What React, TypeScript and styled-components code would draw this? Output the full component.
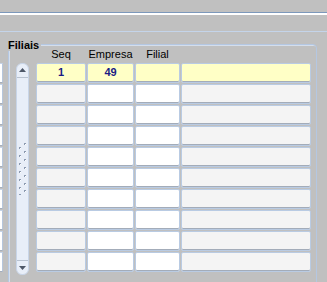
import React from "react";
import styled, { createGlobalStyle } from "styled-components";

const Global = createGlobalStyle`
  html, body { margin: 0; padding: 0; background: #c0c0c0; overflow: hidden; }
  body { font-family: "Liberation Sans", Arial, sans-serif; font-size: 11px; color: #000; }
`;

const Page = styled.div`
  width: 327px;
  height: 282px;
  background: #c0c0c0;
  display: flex;
  flex-direction: column;
  overflow: hidden;
`;

const TopBar = styled.div`
  height: 12px;
  flex: none;
  border-bottom: 1px solid #7c98bb;
`;

const WhiteLine = styled.div`
  height: 2px;
  flex: none;
  background: #ffffff;
`;

const Section = styled.div`
  margin-top: 16px;
  border-top: 1px solid #c4d4ea;
  display: flex;
  flex: 1;
  min-height: 0;
`;

const LeftStrip = styled.div`
  width: 3px;
  margin-top: 31px;
  display: flex;
  flex-direction: column;
  gap: 1px;
  flex: none;
`;

const StripCell = styled.div`
  height: 20px;
  box-sizing: border-box;
  background: #ffffff;
  border-right: 1px solid #b6c6dc;
  border-top: 1px solid #c6d4e8;
  border-bottom: 1px solid #a6aebb;
`;

const Frame = styled.div`
  position: relative;
  margin-left: 5px;
  margin-top: 12px;
  width: 309px;
  height: 260px;
  box-sizing: border-box;
  border: 1px solid #b4c7e2;
  border-radius: 0 4px 0 0;
  box-shadow: inset 1px 1px 0 #d4deec;
  display: flex;
  flex: none;
`;

const FrameTitle = styled.div`
  position: absolute;
  top: -6px;
  left: -1px;
  padding-right: 2px;
  background: #c0c0c0;
  font-weight: bold;
  font-size: 11px;
  line-height: 12px;
  color: #000;
`;

const ScrollBar = styled.div`
  margin-left: 7px;
  margin-top: 18px;
  width: 13px;
  height: 212px;
  box-sizing: border-box;
  border: 1px solid #c8d5e8;
  border-radius: 6px;
  background: #e8eef8;
  display: flex;
  flex-direction: column;
  align-items: center;
  flex: none;
`;

const ArrowButton = styled.div<{ $down?: boolean }>`
  height: 14px;
  width: 100%;
  box-sizing: border-box;
  display: flex;
  align-items: center;
  justify-content: center;
  ${(p) =>
    p.$down
      ? "border-top: 1px solid #b8c2d0; padding-top: 1px;"
      : "border-bottom: 1px solid #b8c2d0; padding-bottom: 1px;"}
  flex: none;
`;

const Track = styled.div`
  flex: 1;
  display: flex;
  align-items: center;
  justify-content: center;
`;

const Table = styled.div`
  margin-left: 7px;
  display: flex;
  flex-direction: column;
  gap: 1px;
`;

const HeaderRow = styled.div`
  height: 17px;
  display: grid;
  grid-template-columns: 50px 47px 45px 130px;
  column-gap: 1px;
  align-items: end;
`;

const HeaderCell = styled.div`
  text-align: center;
  font-size: 11px;
  line-height: 13px;
  color: #000;
  padding-bottom: 1px;
`;

const Row = styled.div`
  display: grid;
  grid-template-columns: 50px 47px 45px 130px;
  column-gap: 1px;
  height: 20px;
`;

const Cell = styled.div<{ $bg: string }>`
  box-sizing: border-box;
  height: 20px;
  background: ${(p) => p.$bg};
  border: 1px solid #b9cbe3;
  border-radius: 2px;
  box-shadow: inset 0 -1px 0 #a3acb9;
  font-weight: bold;
  font-size: 11px;
  line-height: 17px;
  text-align: center;
  color: #1a1a84;
`;

const YELLOW = "#ffffc6";
const GRAY = "#f4f4f4";
const WHITE = "#ffffff";

const Arrow = ({ down }: { down?: boolean }) => (
  <svg width="7" height="4" viewBox="0 0 7 4">
    <polygon points={down ? "0,0 7,0 3.5,4" : "3.5,0 7,4 0,4"} fill="#4e5868" />
  </svg>
);

const Grip = () => {
  const levels = [0, 8, 16, 24, 32, 40, 47];
  return (
    <svg width="9" height="52" viewBox="0 0 9 52">
      {levels.map((y, i) => (
        <g key={i}>
          <rect x="1" y={y + 4} width="2" height="2" fill="#8c9ab0" />
          <rect x="2" y={y + 5} width="1" height="1" fill="#ffffff" />
          <rect x="6" y={y} width="2" height="2" fill="#8c9ab0" />
          <rect x="7" y={y + 1} width="1" height="1" fill="#ffffff" />
        </g>
      ))}
    </svg>
  );
};

const rows = Array.from({ length: 10 }, (_, i) => i);

export default function App() {
  return (
    <Page>
      <Global />
      <TopBar />
      <WhiteLine />
      <Section>
        <LeftStrip>
          {rows.map((i) => (
            <StripCell key={i} />
          ))}
        </LeftStrip>
        <Frame>
          <FrameTitle>Filiais</FrameTitle>
          <ScrollBar>
            <ArrowButton>
              <Arrow />
            </ArrowButton>
            <Track>
              <Grip />
            </Track>
            <ArrowButton $down>
              <Arrow down />
            </ArrowButton>
          </ScrollBar>
          <Table>
            <HeaderRow>
              <HeaderCell>Seq</HeaderCell>
              <HeaderCell>Empresa</HeaderCell>
              <HeaderCell>Filial</HeaderCell>
              <HeaderCell />
            </HeaderRow>
            {rows.map((i) => {
              const first = i === 0;
              return (
                <Row key={i}>
                  <Cell $bg={first ? YELLOW : GRAY}>{first ? "1" : ""}</Cell>
                  <Cell $bg={first ? YELLOW : WHITE}>{first ? "49" : ""}</Cell>
                  <Cell $bg={first ? YELLOW : WHITE} />
                  <Cell $bg={first ? YELLOW : GRAY} />
                </Row>
              );
            })}
          </Table>
        </Frame>
      </Section>
    </Page>
  );
}
